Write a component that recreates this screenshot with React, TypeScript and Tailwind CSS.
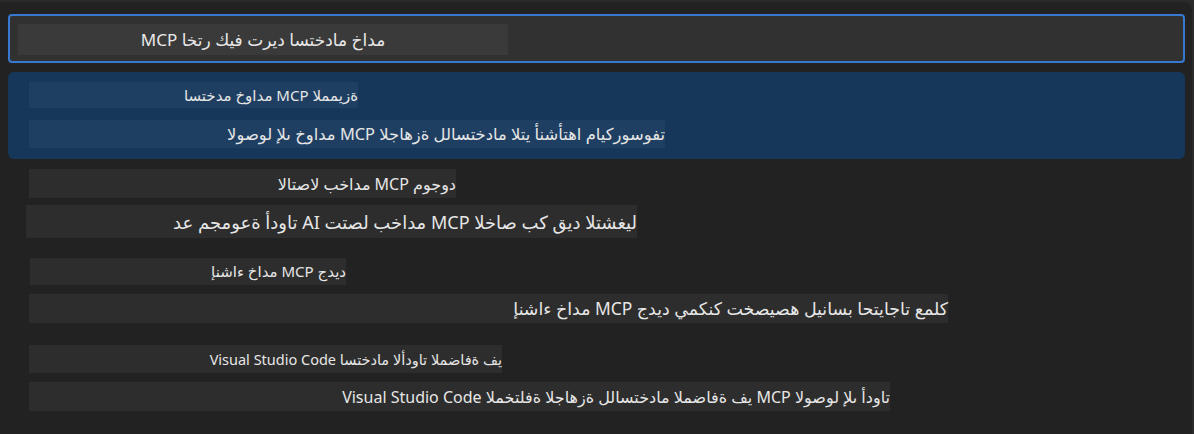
import React from "react";

const font = { fontFamily: '"Noto Sans", "DejaVu Sans", sans-serif' };

function Line({
  text,
  w,
  h,
  ml,
  mt,
  size,
  bg,
}: {
  text: string;
  w: string;
  h: string;
  ml: string;
  mt: string;
  size: string;
  bg: string;
}) {
  return (
    <div
      dir="rtl"
      className={`${w} ${h} ${ml} ${mt} ${size} ${bg} shrink-0 overflow-visible flex items-center justify-start whitespace-nowrap text-[#e6e6e6] leading-none`}
    >
      {text}
    </div>
  );
}

export default function App() {
  return (
    <div className="w-[1194px] h-[434px] bg-[#2b2b2b] overflow-hidden" style={font}>
      <div className="w-[1192px] h-[434px] mt-[2px] bg-[#222222] rounded-tr-[8px] px-[8px] pt-[12px] flex flex-col">
        {/* input */}
        <div className="w-[1177px] h-[49px] border-2 border-[#3778d0] rounded-[4px] bg-[#313131] pl-[8px] pt-[8px]">
          <div
            dir="rtl"
            className="w-[490px] h-[31px] bg-[#3a3a3a] flex items-center justify-center text-[17px] text-[#e8e8e8] whitespace-nowrap leading-none"
          >
            مداخ مادختسا ديرت فيك رتخا MCP
          </div>
        </div>

        {/* selected item */}
        <div className="w-[1177px] h-[87px] mt-[9px] rounded-[6px] bg-[#17375a] pt-[10px] flex flex-col items-start">
          <Line text="ةزيمملا MCP مداوخ مدختسا" w="w-[329px]" h="h-[26px]" ml="ml-[21px]" mt="mt-0" size="text-[15px]" bg="bg-[#1f3f62]" />
          <Line text="تفوسوركيام اهتأشنأ يتلا مادختسالل ةزهاجلا MCP مداوخ ىلإ لوصولا" w="w-[636px]" h="h-[28px]" ml="ml-[21px]" mt="mt-[12px]" size="text-[16.4px]" bg="bg-[#1f3f62]" />
        </div>

        {/* item 2 */}
        <div className="h-[88px] pt-[10px] flex flex-col items-start">
          <Line text="دوجوم MCP مداخب لاصتالا" w="w-[427px]" h="h-[29px]" ml="ml-[21px]" mt="mt-0" size="text-[16px]" bg="bg-[#2d2d2d]" />
          <Line text="ليغشتلا ديق كب صاخلا MCP مداخب لصتت AI تاودأ ةعومجم عد" w="w-[611px]" h="h-[33px]" ml="ml-[18px]" mt="mt-[7px]" size="text-[18px]" bg="bg-[#2d2d2d]" />
        </div>

        {/* item 3 */}
        <div className="h-[88px] pt-[11px] flex flex-col items-start">
          <Line text="ديدج MCP مداخ ءاشنإ" w="w-[316px]" h="h-[27px]" ml="ml-[22px]" mt="mt-0" size="text-[15px]" bg="bg-[#2d2d2d]" />
          <Line text="كلمع تاجايتحا بسانيل هصيصخت كنكمي ديدج MCP مداخ ءاشنإ" w="w-[919px]" h="h-[29px]" ml="ml-[21px]" mt="mt-[9px]" size="text-[17.4px]" bg="bg-[#2d2d2d]" />
        </div>

        {/* item 4 */}
        <div className="h-[88px] pt-[10px] flex flex-col items-start">
          <Line text="يف ةفاضملا تاودألا مادختسا Visual Studio Code" w="w-[473px]" h="h-[28px]" ml="ml-[21px]" mt="mt-0" size="text-[14.5px]" bg="bg-[#2d2d2d]" />
          <Line text="تاودأ ىلإ لوصولا MCP يف ةفاضملا مادختسالل ةزهاجلا ةفلتخملا Visual Studio Code" w="w-[861px]" h="h-[29px]" ml="ml-[21px]" mt="mt-[9px]" size="text-[16px]" bg="bg-[#2d2d2d]" />
        </div>
      </div>
    </div>
  );
}
